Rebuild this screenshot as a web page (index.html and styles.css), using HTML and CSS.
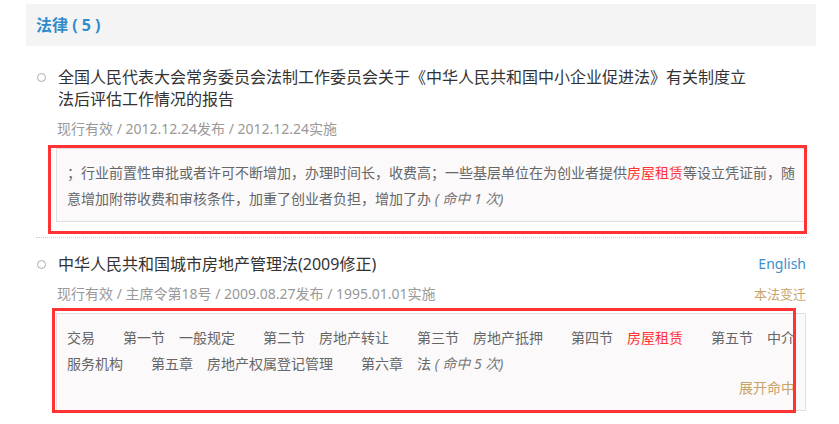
FILE: index.html
```html
<!DOCTYPE html>
<html>
	<head>
		<meta charset="UTF-8">
		<title>法律检索结果</title>
		<link rel="stylesheet" href="styles.css">
	</head>
	<body>
		<div class="result">
			<h3 class="groupTitle">法律 ( 5 )</h3>
			<ul class="lawList">
				<li class="law">
					<div class="lawHead">
						<span class="dot"></span>
						<a class="lawName">全国人民代表大会常务委员会法制工作委员会关于《中华人民共和国中小企业促进法》有关制度立法后评估工作情况的报告</a>
					</div>
					<div class="lawInfo">
						<span>现行有效 / 2012.12.24发布 / 2012.12.24实施</span>
					</div>
					<div class="snippet">
						<div class="snippetText">；行业前置性审批或者许可不断增加，办理时间长，收费高；一些基层单位在为创业者提供<span class="hit">房屋租赁</span>等设立凭证前，随意增加附带收费和审核条件，加重了创业者负担，增加了办 <i>( 命中 1 次)</i></div>
						<div class="mark mark1"></div>
					</div>
				</li>
				<li class="law">
					<div class="lawHead">
						<span class="dot"></span>
						<a class="lawName">中华人民共和国城市房地产管理法(2009修正)</a>
						<a class="english">English</a>
					</div>
					<div class="lawInfo">
						<span>现行有效 / 主席令第18号 / 2009.08.27发布 / 1995.01.01实施</span>
						<a class="history">本法变迁</a>
					</div>
					<div class="snippet">
						<div class="snippetText">交易　　第一节　一般规定　　第二节　房地产转让　　第三节　房地产抵押　　第四节　<span class="hit">房屋租赁</span>　　第五节　中介服务机构　　第五章　房地产权属登记管理　　第六章　法 <i>( 命中 5 次)</i></div>
						<div class="more">展开命中</div>
						<div class="mark mark2"></div>
					</div>
				</li>
			</ul>
		</div>
	</body>
</html>
```

FILE: styles.css
```css
*{margin: 0;padding: 0;}
body{
	font-family: "Noto Sans", "Noto Sans CJK SC", sans-serif;
	color: #333;
	background: #fff;
}
.result{
	width: 790px;
	margin: 4px 0 0 26px;
}
.groupTitle{
	height: 42px;
	line-height: 42px;
	padding-left: 10px;
	background: #f4f4f4;
	color: #2f8bcc;
	font-size: 16px;
	font-weight: bold;
}
.lawList{
	list-style: none;
	margin-top: 5px;
	padding: 0 10px;
}
.law{
	padding: 15px 0 15px;
	border-bottom: 1px dotted #ccc;
}
.law:last-child{
	border-bottom: none;
}
.lawHead{
	display: flex;
	align-items: flex-start;
}
.dot{
	flex: none;
	width: 7px;
	height: 7px;
	border: 1px solid #aaa;
	border-radius: 50%;
	margin: 7px 12px 0 1px;
}
.lawName{
	max-width: 690px;
	font-size: 16px;
	line-height: 22px;
	color: #333;
}
.english{
	margin-left: auto;
	font-size: 14px;
	line-height: 22px;
	color: #3b8fcc;
}
.lawInfo{
	display: flex;
	justify-content: space-between;
	margin: 8px 0 8px 21px;
	font-size: 14px;
	line-height: 22px;
	color: #999;
}
.history{
	font-size: 13px;
	color: #c8a46c;
}
.snippet{
	position: relative;
	margin-left: 20px;
	padding: 11px 10px 9px 10px;
	border: 1px solid #e0e0e0;
	background: #fbf9fa;
	font-size: 14px;
	line-height: 26px;
	color: #666;
}
.snippetText i{
	color: #777;
}
.hit{
	color: #f33;
}
.more{
	text-align: right;
	line-height: 18px;
	margin: 2px 0 4px;
	color: #c8a46c;
}
/* 红框标注 */
.mark{
	position: absolute;
	border: 3px solid #f33;
}
.mark1{
	left: -9px;
	top: -4px;
	right: -2px;
	bottom: -13px;
}
.mark2{
	left: -5px;
	top: -6px;
	right: 9px;
	bottom: -3px;
}
```
